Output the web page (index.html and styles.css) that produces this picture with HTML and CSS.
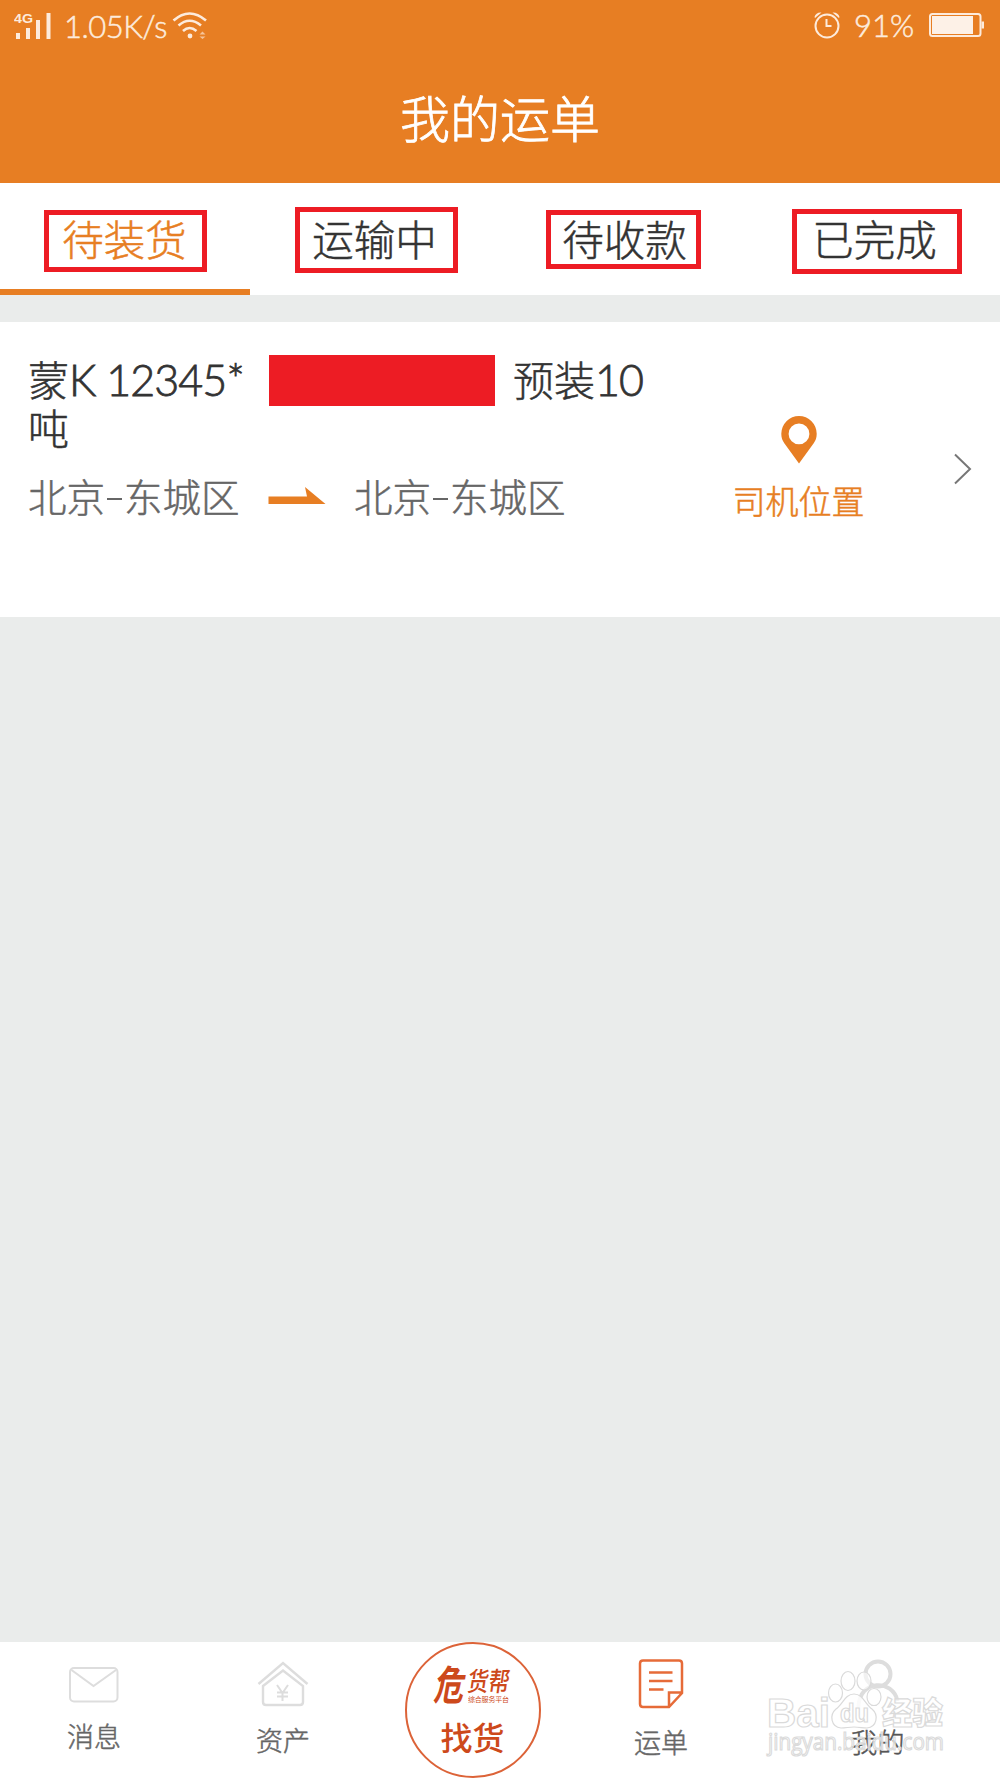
FILE: index.html
```html
<!DOCTYPE html>
<html lang="zh-CN">
<head>
<meta charset="utf-8">
<title>我的运单</title>
<link rel="stylesheet" href="styles.css">
</head>
<body>
<div class="app">
  <header class="header">
    <div class="status">
      <svg class="signal" width="38" height="28" viewBox="0 0 38 28" fill="#fdebdc">
        <rect x="2" y="22" width="4" height="6"/><rect x="12" y="17" width="4" height="11"/><rect x="22" y="9" width="4" height="19"/><rect x="32.500" y="2" width="4" height="26"/>
        <text class="net" x="0" y="12" textLength="19" lengthAdjust="spacingAndGlyphs">4G</text>
      </svg>
      <span class="speed">1.05K/s</span>
      <svg class="wifi" width="36" height="28" viewBox="0 0 36 28" fill="none" stroke="#fdebdc" stroke-width="2.600">
        <path d="M1.500 9.500Q17.500-4.500 34 9.500M6.500 14.500Q17.500 5 29 14.500M11 20Q17.500 14 24.500 20"/>
        <circle cx="18" cy="25" r="2.400" fill="#fdebdc" stroke="none"/>
        <path d="M27.500 23.500l3-3 3 3zM27.500 25.500l3 2.500 3-2.500z" fill="#f6c49a" stroke="none"/>
      </svg>
      <svg class="alarm" width="28" height="28" viewBox="0 0 28 28" fill="none" stroke="#fdebdc" stroke-width="2">
        <circle cx="14" cy="15" r="11.500"/><path d="M13.500 8v7h5"/>
        <path d="M1.500 6Q3 1 8.500 1.500L2 7zM26.500 6Q25 1 19.500 1.500L26 7z" fill="#fdebdc" stroke="none"/>
      </svg>
      <span class="percent">91%</span>
      <svg class="battery" width="56" height="24" viewBox="0 0 56 24" fill="none" stroke="#fdebdc" stroke-width="2">
        <rect x="1" y="1" width="50.500" height="22" rx="2.500"/><rect x="3" y="3" width="41" height="18" fill="#fdf1e7" stroke="none"/><rect x="52.500" y="8.500" width="2.500" height="7" fill="#fdebdc" stroke="none"/>
      </svg>
    </div>
    <h1 class="title">我的运单</h1>
  </header>

  <nav class="tabs">
    <a class="tab active">待装货<i class="mark mark-a"></i></a>
    <a class="tab">运输中<i class="mark mark-b"></i></a>
    <a class="tab">待收款<i class="mark mark-c"></i></a>
    <a class="tab">已完成<i class="mark mark-d"></i></a>
  </nav>

  <main class="list">
    <article class="card">
      <div class="info">
        <div class="cargo"><span class="plate">蒙<span class="num">K 12345*</span></span><span class="redacted"></span><span class="load">预装<span class="num">10</span></span></div>
        <div class="unit">吨</div>
        <div class="route">
          <span>北京<b class="dash"></b>东城区</span>
          <svg width="58" height="18" viewBox="0 0 58 18"><path d="M.5 9.500h38.500l-2-9.500L57.500 17H.5z" fill="#e77e23"/></svg>
          <span>北京<b class="dash"></b>东城区</span>
        </div>
      </div>
      <div class="driver">
        <svg width="36" height="48" viewBox="0 0 36 48"><path d="M18 0A17.700 17.700 0 0 0 .3 17.700c0 4 1 6.500 3 9.500L18 47.500l14.700-20.300c2-3 3-5.500 3-9.500A17.700 17.700 0 0 0 18 0zm0 7.500a10.400 10.400 0 1 1 0 20.800 10.400 10.400 0 0 1 0-20.800z" fill="#e77e23" fill-rule="evenodd"/></svg>
        <span>司机位置</span>
      </div>
      <svg class="chevron" width="18" height="32" viewBox="0 0 18 32"><path d="M1 1.500L16 16 1 30.500" fill="none" stroke="#777" stroke-width="2"/></svg>
    </article>
  </main>

  <footer class="bar">
    <a class="item message">
      <svg width="50" height="36" viewBox="0 0 50 36" fill="none" stroke="#ddd" stroke-width="2"><rect x="1" y="1" width="47.500" height="33.500" rx="4"/><path d="M2.500 3L24.500 19 47 3"/></svg>
      <span>消息</span>
    </a>
    <a class="item">
      <svg width="52" height="46" viewBox="0 0 52 46" fill="none" stroke="#ddd" stroke-width="2.400"><path d="M1.500 23L26 2l24.500 21"/><path d="M6 25L26 9.500 46 25v16q0 3-3 3H9q-3 0-3-3z"/><path d="M20 24l5.500 8 5.500-8M20 31.500h11M20 35.500h11M25.500 31v9" stroke-width="2"/></svg>
      <span>资产</span>
    </a>
    <a class="find">
      <span class="brand"><span class="brand-first">危</span><span class="brand-side"><span class="brand-rest">货帮</span><svg width="42" height="9" viewBox="0 0 42 9"><text class="slogan" x="0" y="7.500" textLength="41">综合服务平台</text></svg></span></span>
      <span class="find-label">找货</span>
    </a>
    <a class="item order">
      <svg width="46" height="50" viewBox="0 0 46 50" fill="none" stroke="#e66b38" stroke-width="2.500"><path d="M5 1.500h36q3 0 3 3V34L31 48H5q-3 0-3-3V4.500q0-3 3-3zM31 48V33.500h13M11 13.500h23.500M11 22h23.500M11 30.500h14.500"/></svg>
      <span>运单</span>
    </a>
    <a class="item me">
      <svg width="56" height="50" viewBox="0 0 56 50" fill="none" stroke="#ddd" stroke-width="4"><circle cx="28" cy="15" r="12.500"/><path d="M8.500 48C9 20 43 20 47.500 42"/></svg>
      <span>我的</span>
    </a>
    <svg class="watermark" width="200" height="90" viewBox="0 0 200 90" fill="#fff" fill-opacity=".6" stroke="#dadada" stroke-width="1.200">
      <text class="wm-brand" x="6" y="38.500" textLength="63" lengthAdjust="spacingAndGlyphs">Bai</text>
      <ellipse cx="74.500" cy="5" rx="7" ry="9"/>
      <ellipse cx="87" cy="-7" rx="7" ry="9.500"/>
      <ellipse cx="103" cy="-7" rx="7" ry="9"/>
      <ellipse cx="113" cy="9" rx="7" ry="8.500"/>
      <path d="M93 6c-9 0-11 10-18 15-7 6-5 18 5 19 5 0 8-1 13-1s9 1 13 1c10-1 12-13 5-19-7-5-9-15-18-15z" fill-opacity=".85"/>
      <text class="wm-du" x="79" y="34" textLength="29" lengthAdjust="spacingAndGlyphs">du</text>
      <text class="wm-cn" x="121" y="35.500" textLength="61" lengthAdjust="spacingAndGlyphs">经验</text>
      <text class="wm-url" x="7" y="62" textLength="176" lengthAdjust="spacingAndGlyphs">jingyan.baidu.com</text>
    </svg>
  </footer>
</div>
</body>
</html>
```
FILE: styles.css
```css
* { box-sizing: border-box; }
body {
  margin: 0;
  background: #eaeceb;
  color: #333;
  font-family: "Noto Sans CJK SC", sans-serif;
  font-weight: 300;
  -webkit-text-stroke: .5px currentColor;
}
svg { display: block; flex: none; }
.net, .slogan { -webkit-text-stroke: 0; }
.app { display: flex; flex-direction: column; width: 1000px; height: 1778px; overflow: hidden; }

.header { height: 183px; background: #e77e23; color: #fff; }
.status {
  display: flex;
  align-items: center;
  height: 52px;
  padding: 0 15px 0 14px;
  color: #fdebdc;
  font-family: Lato, sans-serif;
  font-size: 31px;
}
.net { font: 700 12px "Liberation Sans", sans-serif; }
.signal { margin-top: -3px; }
.speed { width: 108px; margin: -1px 0 0 12px; white-space: nowrap; letter-spacing: -.5px; }
.wifi { margin-top: -3px; }
.alarm { margin: -3px 2px 0 auto; }
.percent { width: 62px; margin: -2px 13px 0 11px; white-space: nowrap; }
.battery { margin-top: -2px; }
.title {
  margin: 29px 0 0;
  text-align: center;
  font-size: 50px;
  font-weight: 300;
  line-height: 70px;
  -webkit-text-stroke-width: .8px;
}

.tabs { display: flex; height: 112px; background: #fff; }
.tab {
  position: relative;
  flex: 1;
  padding-right: 1px;
  text-align: center;
  font-size: 41.500px;
  line-height: 111px;
}
.active { color: #e77e23; border-bottom: 6px solid #e77e23; }
.mark { position: absolute; border: 5px solid #ed1c24; }
.mark-a { left: 44px; top: 27px; width: 163px; height: 62px; }
.mark-b { left: 45px; top: 24px; width: 163px; height: 66px; }
.mark-c { left: 46px; top: 27px; width: 155px; height: 59px; }
.mark-d { left: 42px; top: 26px; width: 170px; height: 65px; }

.list { flex: 1; padding-top: 27px; }
.card { display: flex; height: 295px; padding: 33px 28px 0; background: #fff; }
.info { width: 692px; }
.cargo { display: flex; height: 51px; font-size: 41px; line-height: 47px; white-space: nowrap; }
.num { font-family: Lato, sans-serif; font-size: 43px; letter-spacing: -.9px; -webkit-text-stroke-width: .8px; }
.plate { width: 241px; }
.redacted { width: 226px; height: 51px; background: #ed1c24; }
.load { margin-left: 18px; }
.unit { height: 46px; font-size: 41px; line-height: 41px; }
.route { display: flex; margin-top: 17px; color: #666; font-size: 38.500px; line-height: 52px; white-space: nowrap; }
.route span { width: 240px; }
.route svg { margin: 18px 28px 0 0; }
.dash { display: inline-block; width: 15px; height: 2.500px; margin: 0 2px; background: #666; vertical-align: 12px; }
.driver {
  display: flex;
  flex-direction: column;
  align-items: center;
  width: 159px;
  padding-top: 61px;
  color: #e77e23;
  font-size: 33px;
  line-height: 44px;
}
.driver span { margin-top: 14px; }
.chevron { margin: 98px 0 0 76px; }

.bar {
  position: relative;
  display: grid;
  grid-template-columns: repeat(4, 189px) 1fr;
  height: 136px;
  background: #fff;
  color: #666;
}
.item {
  display: flex;
  flex-direction: column;
  align-items: center;
  justify-content: flex-end;
  padding: 0 1px 18px 0;
  font-size: 27px;
  line-height: 40px;
}
.item span { margin-top: 13px; }
.message { padding-bottom: 22px; }
.order, .me { padding-bottom: 16px; }
.order span { margin-top: 13px; }
.me span { margin-top: 13px; color: #555; }
.find {
  display: flex;
  flex-direction: column;
  align-items: center;
  justify-self: center;
  width: 136px;
  height: 136px;
  padding-top: 17px;
  border: 2px solid #dc6338;
  border-radius: 50%;
  color: #cd491b;
  -webkit-text-stroke-width: 0;
}
.brand { display: flex; font-weight: 700; }
.brand-first { width: 32px; font-size: 30px; line-height: 42px; transform: skewX(-10deg) scaleY(1.350); }
.brand-side { display: flex; flex-direction: column; padding-top: 5px; }
.brand-rest { font-size: 21px; font-weight: 500; line-height: 28px; transform: skewX(-8deg) scaleY(1.250); }
.slogan { font: 400 7px "Noto Sans CJK SC", sans-serif; fill: #cd491b; }
.find-label { margin-top: 13px; font-size: 32px; font-weight: 500; line-height: 40px; }

.watermark { position: absolute; left: 761px; top: 46px; overflow: visible; }
.wm-brand, .wm-du, .wm-cn, .wm-url { -webkit-text-stroke: 1.2px #dadada; }
.wm-brand { font: 700 40px "Liberation Sans", sans-serif; }
.wm-du { font: 700 25px "Liberation Sans", sans-serif; }
.wm-cn { font: 900 31px "Noto Sans CJK SC", sans-serif; }
.wm-url { font: 400 23px "Open Sans", sans-serif; -webkit-text-stroke-width: .7px; }
```
